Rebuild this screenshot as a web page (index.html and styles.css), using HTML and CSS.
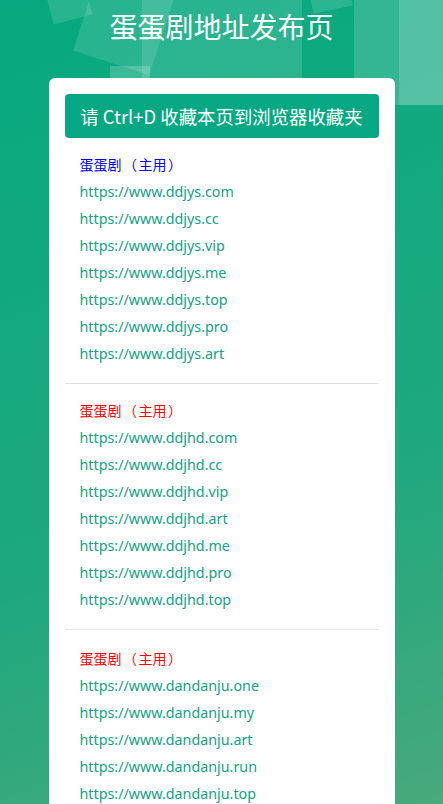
FILE: index.html
```html
<!DOCTYPE html>
<html lang="zh-CN">
<head>
  <meta charset="UTF-8" />
  <title>蛋蛋剧地址发布页</title>
  <meta name="viewport" content="width=device-width, initial-scale=1" />
  <link rel="stylesheet" href="styles.css">
</head>
<body>
  <div class="bg">
    <span class="sq sq1"></span>
    <span class="sq sq2"></span>
    <span class="sq sq3"></span>
    <span class="sq sq4"></span>
    <span class="sq sq5"></span>
    <span class="sq sq6"></span>
    <span class="sq sq7"></span>
  </div>
  <div class="page">
    <h1 class="title">蛋蛋剧地址发布页</h1>
    <div class="card">
      <div class="tip">请 Ctrl+D 收藏本页到浏览器收藏夹</div>

      <div class="group">
        <div class="label blue">蛋蛋剧<span class="paren">（</span>主用<span class="paren">）</span></div>
        <a href="https://www.ddjys.com">https://www.ddjys.com</a>
        <a href="https://www.ddjys.cc">https://www.ddjys.cc</a>
        <a href="https://www.ddjys.vip">https://www.ddjys.vip</a>
        <a href="https://www.ddjys.me">https://www.ddjys.me</a>
        <a href="https://www.ddjys.top">https://www.ddjys.top</a>
        <a href="https://www.ddjys.pro">https://www.ddjys.pro</a>
        <a href="https://www.ddjys.art">https://www.ddjys.art</a>
      </div>

      <div class="group">
        <div class="label red">蛋蛋剧<span class="paren">（</span>主用<span class="paren">）</span></div>
        <a href="https://www.ddjhd.com">https://www.ddjhd.com</a>
        <a href="https://www.ddjhd.cc">https://www.ddjhd.cc</a>
        <a href="https://www.ddjhd.vip">https://www.ddjhd.vip</a>
        <a href="https://www.ddjhd.art">https://www.ddjhd.art</a>
        <a href="https://www.ddjhd.me">https://www.ddjhd.me</a>
        <a href="https://www.ddjhd.pro">https://www.ddjhd.pro</a>
        <a href="https://www.ddjhd.top">https://www.ddjhd.top</a>
      </div>

      <div class="group">
        <div class="label red">蛋蛋剧<span class="paren">（</span>主用<span class="paren">）</span></div>
        <a href="https://www.dandanju.one">https://www.dandanju.one</a>
        <a href="https://www.dandanju.my">https://www.dandanju.my</a>
        <a href="https://www.dandanju.art">https://www.dandanju.art</a>
        <a href="https://www.dandanju.run">https://www.dandanju.run</a>
        <a href="https://www.dandanju.top">https://www.dandanju.top</a>
      </div>
    </div>
  </div>
</body>
</html>
```

FILE: styles.css
```css
html {
  background: linear-gradient(160deg, #06a97f 0%, #1fa87e 60%, #4ca97c 100%);
  min-height: 100%;
}
body {
  margin: 0;
  font-family: "Noto Sans", "Noto Sans CJK SC", sans-serif;
  color: #333;
}
.bg {
  position: absolute;
  left: 0;
  top: 0;
  width: 443px;
  height: 110px;
  overflow: hidden;
}
.sq {
  position: absolute;
  display: block;
  background: rgba(255, 255, 255, 0.13);
}
.sq1 {
  left: 48px;
  top: -20px;
  width: 40px;
  height: 40px;
  transform: rotate(-15deg);
}
.sq2 {
  left: 85px;
  top: -25px;
  width: 80px;
  height: 90px;
  transform: rotate(18deg);
}
.sq3 {
  left: 142px;
  top: 0;
  width: 160px;
  height: 78px;
}
.sq4 {
  left: 110px;
  top: 66px;
  width: 40px;
  height: 14px;
  background: rgba(255, 255, 255, 0.2);
}
.sq5 {
  left: 354px;
  top: 0;
  width: 89px;
  height: 105px;
  background: rgba(255, 255, 255, 0.16);
}
.sq6 {
  left: 399px;
  top: 0;
  width: 44px;
  height: 105px;
  background: rgba(255, 255, 255, 0.16);
}
.sq7 {
  left: 310px;
  top: -20px;
  width: 40px;
  height: 30px;
  transform: rotate(-12deg);
}
.page {
  position: relative;
}
.title {
  margin: 0;
  padding-top: 7px;
  height: 70px;
  box-sizing: border-box;
  text-align: center;
  color: #fff;
  font-family: "Noto Sans CJK SC", sans-serif;
  font-size: 28px;
  font-weight: normal;
  line-height: 38px;
}
.card {
  width: 346px;
  margin: 8px auto 0 auto;
  padding: 16px 16px 20px 16px;
  box-sizing: border-box;
  background: #fff;
  border-radius: 6px;
}
.tip {
  height: 44px;
  line-height: 44px;
  background: #05a882;
  color: #fff;
  border-radius: 4px;
  text-align: center;
  font-size: 18.4px;
  font-family: "Noto Sans CJK SC", sans-serif;
}
.group {
  padding: 13px 15px 16px 15px;
  border-bottom: 1px solid #e2e2e2;
}
.group:last-child {
  border-bottom: none;
  padding-top: 15px;
}
.label {
  font-family: "Noto Sans CJK SC", sans-serif;
  font-size: 14px;
  line-height: 27px;
}
.paren {
  display: inline-block;
  width: 17px;
  text-align: center;
}
.blue {
  color: #0000ff;
}
.red {
  color: #ff0000;
}
.group a {
  display: block;
  color: #14a283;
  text-decoration: none;
  font-size: 14.3px;
  line-height: 27px;
}
```
